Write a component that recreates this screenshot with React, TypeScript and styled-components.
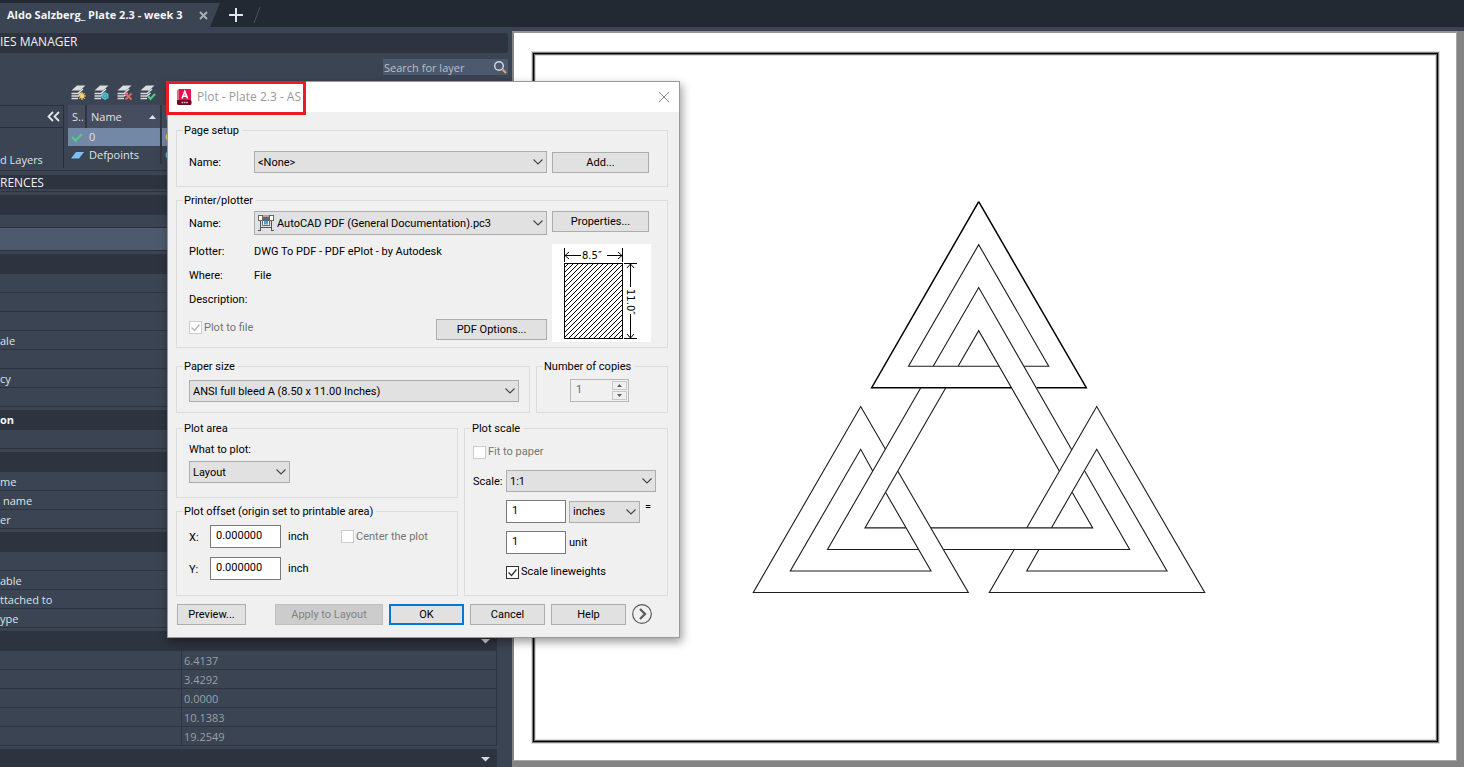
import React from "react";
import styled, { createGlobalStyle, css } from "styled-components";

const GlobalStyle = createGlobalStyle`
  *, *::before, *::after { box-sizing: border-box; }
  body {
    margin: 0;
    background: #3b4453;
    font-family: "Open Sans", "Noto Sans", sans-serif;
    font-size: 11px;
    line-height: 14px;
  }
  button, input, select { font: inherit; margin: 0; }
`;

/* ---------- application shell ---------- */

const Shell = styled.div`
  position: relative;
  display: flex;
  flex-direction: column;
  height: 100vh;
  overflow: hidden;
`;

const TabBar = styled.nav`
  display: flex;
  flex: none;
  height: 27px;
  padding-top: 3px;
  background: #222932;
`;

const FileTab = styled.div`
  display: flex;
  align-items: center;
  gap: 9px;
  width: 220px;
  padding-left: 7px;
  background: #3b4453;
  color: #f2f4f6;
  font-weight: 700;
  white-space: nowrap;
  clip-path: polygon(0 0, 100% 0, 210px 100%, 0 100%);
`;

const TabTitle = styled.span`
  width: 183px;
`;

const BareButton = styled.button`
  display: flex;
  align-items: center;
  justify-content: center;
  padding: 0;
  border: 0;
  background: none;
  color: inherit;
`;

const TabActions = styled.div`
  display: flex;
  align-items: center;
  gap: 10px;
  padding-left: 9px;
`;

const Workspace = styled.div`
  display: flex;
  flex: 1;
  min-height: 0;
`;

/* ---------- left palettes ---------- */

const Palettes = styled.aside`
  flex: none;
  width: 512px;
  padding-top: 6px;
  overflow: hidden;
  background: #3b4453;
  color: #dfe2e6;
  white-space: nowrap;
`;

const PaletteTitle = styled.h2<{ $short?: boolean }>`
  margin: 0 4px 0 0;
  height: ${(p) => (p.$short ? 14 : 20)}px;
  border-radius: 0 3px 3px 0;
  background: #2e343f;
  color: #eef0f2;
  font-size: 12px;
  font-weight: 400;
  line-height: ${(p) => (p.$short ? 16 : 18)}px;
`;

const SearchRow = styled.div`
  display: flex;
  justify-content: flex-end;
  padding: 6px 4px 0 0;
`;

const SearchBox = styled.label`
  display: flex;
  align-items: center;
  width: 125px;
  height: 16px;
  background: #4d5a6d;
`;

const SearchInput = styled.input`
  flex: 1;
  min-width: 0;
  height: 16px;
  padding: 0 1px;
  border: 0;
  background: none;
  color: #b9bfc8;
  &::placeholder { color: #b9bfc8; opacity: 1; }
`;

const LayerTools = styled.div`
  display: flex;
  gap: 5px;
  padding: 9px 0 3px 70px;
`;

const LayerArea = styled.div`
  display: flex;
  gap: 4px;
  height: 66px;
  border-bottom: 1px solid #2e343f;
`;

const FilterTree = styled.div`
  display: flex;
  flex-direction: column;
  justify-content: space-between;
  width: 64px;
  height: 63px;
  border: 1px solid #2a303b;
  border-width: 1px 1px 0 0;
`;

const FilterHead = styled.div`
  display: flex;
  justify-content: flex-end;
  height: 22px;
  padding-right: 3px;
  border-bottom: 1px solid #2a303b;
`;

const FilterItem = styled.span`
  line-height: 16px;
`;

const LayerTable = styled.table`
  width: 400px;
  height: 59px;
  border-collapse: collapse;
  table-layout: fixed;
`;

const LayerHeadCell = styled.th<{ $w?: number }>`
  width: ${(p) => (p.$w ? p.$w + "px" : "auto")};
  height: 23px;
  padding: 0 4px;
  border-right: 2px solid #2f3642;
  background: #454d5f;
  font-weight: 400;
  text-align: left;
  overflow: hidden;
`;

const HeadLabel = styled.span`
  display: flex;
  align-items: center;
  justify-content: space-between;
`;

const LayerRow = styled.tr<{ $selected?: boolean }>`
  height: 18px;
  background: ${(p) => (p.$selected ? "#7387a6" : "transparent")};
`;

const LayerCell = styled.td`
  padding: 0 3px;
  line-height: 14px;
  & + & { border-right: 2px solid #2f3642; }
  svg { display: block; }
`;

const RefBlock = styled.div`
  padding-top: 4px;
`;

const RefLine = styled.div`
  height: 3px;
  margin-bottom: 3px;
  border-bottom: 1px solid #2e343f;
`;

const Selector = styled.div`
  height: 36px;
  margin-bottom: 3px;
  padding-top: 12px;
  border-bottom: 1px solid #2a303b;
  &::before {
    content: "";
    display: block;
    height: 23px;
    border-top: 1px solid #2a303b;
    background: #4d5a6d;
  }
`;

const Section = styled.section`
  width: 497px;
  margin-bottom: 3px;
`;

const SectionTitle = styled.h3`
  display: flex;
  align-items: center;
  justify-content: space-between;
  height: 20px;
  margin: 0;
  padding-right: 7px;
  background: #2e343f;
  color: #f2f4f6;
  font-size: 11px;
  font-weight: 700;
`;

const PropTable = styled.table`
  width: 100%;
  border-collapse: separate;
  border-spacing: 0;
  table-layout: fixed;
`;

const PropName = styled.th<{ $indent?: boolean }>`
  width: 182px;
  height: 19px;
  padding: 1px 0 0 ${(p) => (p.$indent ? 3 : 0)}px;
  border: 1px solid #2e343f;
  border-width: 0 1px 1px 0;
  font-weight: 400;
  text-align: left;
`;

const PropValue = styled.td`
  padding: 1px 2px 0;
  border: 1px solid #2e343f;
  border-width: 0 1px 1px 0;
  color: #9a9fa7;
`;

/* ---------- drawing ---------- */

const Canvas = styled.main`
  display: flex;
  flex: 1;
  min-width: 0;
  padding: 0 7px 6px 0;
  background: linear-gradient(#3b4453 4px, #848484 4px);
`;

const Paper = styled.div`
  display: flex;
  flex: 1;
  margin-top: 4px;
  padding: 20px 18px 18px 19px;
  border: 1px solid #a6a6a6;
  border-width: 2px 1px 1px 2px;
  border-top-color: #949494;
  border-left-color: #848484;
  background: #fff;
`;

const Frame = styled.div`
  display: flex;
  flex: 1;
  min-height: 0;
  border: 1px solid #000;
  box-shadow:
    0 0 0 1px #7c7c7c, 0 0 0 2px #dcdcdc,
    inset 0 0 0 1px #6a6a6a, inset 0 0 0 2px #dcdcdc;
`;

const Drawing = styled.svg`
  display: block;
  width: 100%;
  height: 100%;
`;

/* ---------- plot dialog ---------- */

const Dialog = styled.form`
  position: absolute;
  top: 81px;
  left: 167px;
  width: 513px;
  border: 1px solid #9a9a9a;
  background: #f0f0f0;
  box-shadow: 2px 4px 9px rgba(0, 0, 0, 0.4);
  color: #000;
  font-family: Roboto, "Liberation Sans", sans-serif;
  white-space: nowrap;
`;

const TitleBar = styled.header`
  display: flex;
  align-items: center;
  justify-content: space-between;
  height: 30px;
  padding: 0 9px;
  background: #fff;
  color: #999;
  font-family: "Open Sans", sans-serif;
`;

const TitleText = styled.h1`
  display: flex;
  align-items: center;
  gap: 5px;
  margin: 0;
  font-size: 12px;
  font-weight: 400;
`;

const Highlight = styled.div`
  position: absolute;
  top: -1px;
  left: -2px;
  width: 140px;
  height: 34px;
  border: 3px solid #ed1c24;
  pointer-events: none;
`;

const DialogBody = styled.div`
  padding: 11px 11px 12px 8px;
`;

const Columns = styled.div<{ $mt: number }>`
  display: flex;
  gap: 6px;
  margin-top: ${(p) => p.$mt}px;
`;

const Group = styled.fieldset<{ $h: number; $w?: number; $mt?: number; $pt?: number; $pl?: number }>`
  min-width: 0;
  width: ${(p) => (p.$w ? p.$w + "px" : "auto")};
  height: ${(p) => p.$h}px;
  margin: ${(p) => p.$mt ?? 0}px 0 0;
  padding: ${(p) => p.$pt ?? 5}px 0 0 ${(p) => p.$pl ?? 12}px;
  border: 1px solid #dcdcdc;
  ${(p) => !p.$w && css`flex: 1;`}
`;

const Legend = styled.legend<{ $ml?: number }>`
  height: 14px;
  margin-left: ${(p) => p.$ml ?? -6}px;
  padding: 0 3px 0 1px;
  line-height: 16px;
`;

const Line = styled.div<{ $gap?: number; $h?: number; $mt?: number }>`
  display: flex;
  align-items: center;
  gap: ${(p) => p.$gap ?? 5}px;
  min-height: ${(p) => p.$h ?? 22}px;
  margin-top: ${(p) => p.$mt ?? 0}px;
`;

const Caption = styled.label<{ $w?: number }>`
  flex: none;
  width: ${(p) => (p.$w ? p.$w + "px" : "auto")};
  padding-top: 2px;
`;

const Unit = styled.span<{ $w?: number; $top?: boolean }>`
  width: ${(p) => (p.$w ? p.$w + "px" : "auto")};
  padding-left: 2px;
  ${(p) => p.$top && css`align-self: flex-start;`}
`;

const SelectBox = styled.span<{ $w: number; $h?: number }>`
  display: grid;
  align-items: center;
  width: ${(p) => p.$w}px;
  height: ${(p) => p.$h ?? 22}px;
  & > * { grid-area: 1 / 1; }
  & > svg { pointer-events: none; z-index: 1; }
`;

const NativeSelect = styled.select<{ $icon?: boolean }>`
  width: 100%;
  height: 100%;
  padding: 1px 18px 0 ${(p) => (p.$icon ? 22 : 3)}px;
  appearance: none;
  border: 1px solid #adadad;
  border-radius: 0;
  background: #e1e1e1;
  color: #000;
`;

const Chevron = styled.svg`
  justify-self: end;
  margin-right: 4px;
`;

const PlotterMark = styled.svg`
  justify-self: start;
  margin-left: 4px;
`;

const PushButton = styled.button<{ $w: number; $primary?: boolean; $top?: boolean }>`
  width: ${(p) => p.$w}px;
  height: 21px;
  padding: 1px 0 0;
  border: ${(p) => (p.$primary ? "2px solid #0078d7" : "1px solid #adadad")};
  background: #e1e1e1;
  color: #000;
  ${(p) => p.$top && css`align-self: flex-start;`}
  &:disabled {
    border-color: #bfbfbf;
    background: #ccc;
    color: #838383;
  }
`;

const TextBox = styled.input<{ $w: number }>`
  width: ${(p) => p.$w}px;
  height: 23px;
  padding: 0 5px 2px;
  border: 1px solid #7a7a7a;
  background: #fff;
  color: #000;
`;

const CheckLabel = styled.label<{ $disabled?: boolean }>`
  display: flex;
  align-items: center;
  gap: 2px;
  color: ${(p) => (p.$disabled ? "#767676" : "#000")};
`;

const CheckCell = styled.span`
  display: grid;
  width: 13px;
  height: 13px;
  & > * { grid-area: 1 / 1; }
  & > svg { pointer-events: none; }
`;

const CheckInput = styled.input`
  width: 13px;
  height: 13px;
  appearance: none;
  border: 1px solid #333;
  background: #fff;
  &:disabled { border-color: #ccc; }
`;

const PrinterBody = styled.div`
  display: flex;
  align-items: flex-start;
  gap: 5px;
`;

const Facts = styled.dl`
  display: grid;
  grid-template-columns: 65px 1fr;
  grid-auto-rows: 24px;
  align-items: center;
  width: 358px;
  margin: 5px 0 7px;
`;

const Term = styled.dt`
  margin: 0;
`;

const Fact = styled.dd`
  margin: 0;
`;

const PrinterFoot = styled.div`
  display: flex;
  align-items: flex-start;
  justify-content: space-between;
  height: 21px;
`;

const PreviewPane = styled.svg`
  display: block;
  margin-top: 9px;
  background: #fff;
`;

const Spinner = styled.div`
  display: flex;
  width: 59px;
  height: 23px;
  margin-left: 33px;
  padding: 1px;
  border: 1px solid #b8b8b8;
`;

const SpinnerInput = styled.input`
  flex: 1;
  min-width: 0;
  padding: 0 4px 2px;
  border: 0;
  background: #f0f0f0;
  color: #6d6d6d;
`;

const SpinnerArrows = styled.div`
  display: flex;
  flex-direction: column;
  gap: 1px;
`;

const SpinButton = styled.button`
  display: flex;
  align-items: center;
  justify-content: center;
  width: 15px;
  flex: 1;
  padding: 0;
  border: 1px solid #c8c8c8;
  background: #f0f0f0;
`;

const Stack = styled.div<{ $w?: number }>`
  width: ${(p) => (p.$w ? p.$w + "px" : "auto")};
`;

const ScaleInputs = styled.div`
  margin: 8px 0 0 33px;
`;

const Footer = styled.footer`
  display: flex;
  align-items: center;
  gap: 6px;
  height: 21px;
  margin: 8px 0 0 1px;
`;

const Spacer = styled.span`
  width: 17px;
`;

const ExpandButton = styled(BareButton)`
  align-self: flex-start;
`;

/* ---------- small drawings ---------- */

type LayerBadge = "new" | "frozen" | "delete" | "current";

const LayerIcon = ({ badge }: { badge: LayerBadge }) => (
  <svg width="18" height="18" viewBox="0 0 18 18" fill="none">
    <path d="M7 1.500h8.500l-5.500 5H1.500z" fill="#dadcdf" />
    <path d="M1.500 9.500H8l5-4.500M1.500 12H8l3.500-3M1.500 14.500H8" stroke="#dadcdf" strokeWidth="1.500" />
    {badge === "new" && (
      <g stroke="#f6c65b" strokeWidth="1.200">
        <path d="M12 8v8M8 12h8M9.300 9.300l5.400 5.400M14.700 9.300l-5.400 5.400" />
        <circle cx="12" cy="12" r="1.800" fill="#f9d98c" />
      </g>
    )}
    {badge === "frozen" && (
      <g stroke="#52bccb" strokeWidth="1.300">
        <path d="M12 8v8M8.500 10l7 4M15.500 10l-7 4" />
        <circle cx="12" cy="12" r="2.800" />
      </g>
    )}
    {badge === "delete" && <path d="M9.500 9.500l6 6M15.500 9.500l-6 6" stroke="#f0615c" strokeWidth="2" />}
    {badge === "current" && <path d="M9 12l2.500 3L16 10" stroke="#55c987" strokeWidth="2" />}
  </svg>
);

const Caret = () => (
  <svg width="9" height="5" viewBox="0 0 9 5">
    <path d="M0 0h9L4.500 4.500z" fill="#d6d9dd" />
  </svg>
);

const Tick = ({ muted }: { muted?: boolean }) => (
  <svg width="13" height="13" viewBox="0 0 13 13" fill="none">
    <path d="M2.500 6.500l3 3 5-6" stroke={muted ? "#b4b4b4" : "#333"} strokeWidth="1.300" />
  </svg>
);

const AppMark = () => (
  <svg width="15" height="16" viewBox="0 0 15 16">
    <path d="M2 0h11.500l.5 1v11H1V1z" fill="#e6124f" />
    <path d="M0 1.500L2 0v12H0z" fill="#f0648c" />
    <path d="M0 11h13.500l1 1v3l-1 1H1l-1-1z" fill="#6d0a24" />
    <path d="M5 9.500L7.800 2.500l2.800 7M6 7.300h3.600" stroke="#fff" strokeWidth="1.600" fill="none" />
    <path d="M4.500 13.500h6.500" stroke="#e3b4c0" strokeWidth="1.600" strokeDasharray="1.700 .6" />
  </svg>
);

const PlotterIcon = () => (
  <PlotterMark width="16" height="16" viewBox="0 0 16 16" fill="none">
    <path d="M0 0h16v6H0z" fill="#666" />
    <path d="M1 1h3v4H1zM12 1h3v4h-3z" fill="#fff" />
    <path d="M5 0h6v2H5z" fill="#a8a8a8" />
    <path d="M2.500 6v9M13.500 6v9M3 12.500h10M0 15.500h3M13 15.500h3" stroke="#555" />
    <path d="M4.500 5.500h7v5h-7z" fill="#fff" stroke="#666" />
    <path d="M6 6h4v3.500H6z" fill="#4f9fd8" />
  </PlotterMark>
);

const hatch = Array.from({ length: 28 }, (_, i) => 24 + i * 5);

const PaperPreview = () => (
  <PreviewPane width="99" height="98" viewBox="0 0 99 98" fill="none" stroke="#000">
    <defs>
      <clipPath id="sheet">
        <rect x="12" y="19" width="59" height="76" />
      </clipPath>
    </defs>
    <g clipPath="url(#sheet)" shapeRendering="crispEdges">
      {hatch.map((n) => (
        <path key={n} d={`M12 ${n}l60 -60`} />
      ))}
    </g>
    <rect x="12.500" y="19.500" width="58" height="75" />
    <path d="M12.500 4v14M70.500 4v14M12.500 11.500H29M55 11.500h15.500M17 8l-4 3.500 4 3.500M66 8l4 3.500-4 3.500" />
    <path d="M72 19.500h13M72 94.500h13M78.500 20v23M78.500 70v24M75 24l3.500-4 3.500 4M75 90l3.500 4 3.500-4" />
    <g fill="#000" stroke="none" fontFamily="DejaVu Sans, sans-serif" fontSize="10">
      <text x="30" y="15">8.5″</text>
      <text transform="translate(75 45) rotate(90)">11.0″</text>
    </g>
  </PreviewPane>
);

const strokes = {
  top: "M978.700 201.700L871.700 387.700H1011.600M1036.600 387.700H1086.300L978.700 201.700",
  topInner: "M999.300 366.300H908.500L978.700 244.700L1048.700 366.300H1024.200",
  centre:
    "M933.200 366.300L978.700 287.500L1071.700 449.700M920.800 387.700L827.500 549.500H918.500M943.500 549.500H1129.700L1084.700 471",
  centreInner:
    "M958.100 366.300L978.700 330.700L1059.300 471M945.800 387.700L865 527.900H905.900M931 527.900H1092.700L1072.300 492.500",
  left: "M885.300 449L860.700 406.500L753.300 592.500H968.300L897.700 471",
  leftInner: "M872.700 471L860.700 449.300L790.300 571H931L885.700 492.500",
  right: "M1026.700 527.900L1096.700 406.500L1204.700 592.500H989.300L1014.200 549.500",
  rightInner: "M1051.400 527.900L1096.700 449.300L1167 571H1026.700L1038.900 549.500",
};

/* ---------- building blocks ---------- */

type DropDownProps = { id: string; w: number; h?: number; value: string; label?: string; icon?: boolean };

const DropDown = ({ id, w, h, value, label, icon }: DropDownProps) => (
  <SelectBox $w={w} $h={h}>
    {icon && <PlotterIcon />}
    <NativeSelect id={id} aria-label={label} $icon={icon} defaultValue={value}>
      <option>{value}</option>
    </NativeSelect>
    <Chevron width="10" height="6" viewBox="0 0 10 6" fill="none">
      <path d="M.5 .5L5 5L9.500 .5" stroke="#444" strokeWidth="1.100" />
    </Chevron>
  </SelectBox>
);

const Check = ({ text, checked, disabled }: { text: string; checked?: boolean; disabled?: boolean }) => (
  <CheckLabel $disabled={disabled}>
    <CheckCell>
      <CheckInput type="checkbox" defaultChecked={checked} disabled={disabled} />
      {checked && <Tick muted={disabled} />}
    </CheckCell>
    {text}
  </CheckLabel>
);

type Row = { name?: string; value?: string; indent?: boolean };

const PropertySection = ({ title, rows, arrow }: { title?: string; rows: Row[]; arrow?: boolean }) => (
  <Section>
    <SectionTitle>
      <span>{title}</span>
      {arrow && <Caret />}
    </SectionTitle>
    <PropTable>
      <tbody>
        {rows.map((r, i) => (
          <tr key={i}>
            <PropName scope="row" $indent={r.indent}>{r.name}</PropName>
            <PropValue>{r.value}</PropValue>
          </tr>
        ))}
      </tbody>
    </PropTable>
  </Section>
);

const LeftPalettes = () => (
  <Palettes>
    <PaletteTitle>IES MANAGER</PaletteTitle>
    <SearchRow>
      <SearchBox>
        <SearchInput aria-label="Search for layer" placeholder="Search for layer" />
        <svg width="16" height="16" viewBox="0 0 16 16" fill="none">
          <circle cx="7" cy="7" r="4.300" stroke="#d6dade" strokeWidth="1.400" />
          <path d="M10.500 10.500l3.500 3.500" stroke="#e0a766" strokeWidth="2" />
        </svg>
      </SearchBox>
    </SearchRow>
    <LayerTools>
      <BareButton aria-label="New layer"><LayerIcon badge="new" /></BareButton>
      <BareButton aria-label="New frozen layer"><LayerIcon badge="frozen" /></BareButton>
      <BareButton aria-label="Delete layer"><LayerIcon badge="delete" /></BareButton>
      <BareButton aria-label="Set current"><LayerIcon badge="current" /></BareButton>
    </LayerTools>
    <LayerArea>
      <FilterTree>
        <FilterHead>
          <BareButton aria-label="Collapse">
            <svg width="13" height="11" viewBox="0 0 13 11" fill="none">
              <path d="M6 1L1.500 5.500L6 10M12 1L7.500 5.500L12 10" stroke="#e3e6e9" strokeWidth="1.800" />
            </svg>
          </BareButton>
        </FilterHead>
        <FilterItem>d Layers</FilterItem>
      </FilterTree>
      <LayerTable>
        <thead>
          <tr>
            <LayerHeadCell $w={18}>S..</LayerHeadCell>
            <LayerHeadCell $w={75}>
              <HeadLabel>
                Name
                <svg width="7" height="4" viewBox="0 0 7 4"><path d="M0 4h7L3.500 0z" fill="#dfe2e6" /></svg>
              </HeadLabel>
            </LayerHeadCell>
            <LayerHeadCell>On</LayerHeadCell>
          </tr>
        </thead>
        <tbody>
          <LayerRow $selected>
            <LayerCell>
              <svg width="12" height="9" viewBox="0 0 12 9" fill="none">
                <path d="M1 4l3.500 3.500L11 1" stroke="#55c987" strokeWidth="2.200" />
              </svg>
            </LayerCell>
            <LayerCell>0</LayerCell>
            <LayerCell>
              <svg width="10" height="10" viewBox="0 0 10 10"><circle cx="5" cy="5" r="4.500" fill="#f6c65b" /></svg>
            </LayerCell>
          </LayerRow>
          <LayerRow>
            <LayerCell>
              <svg width="13" height="7" viewBox="0 0 13 7"><path d="M5 0h8L8 6.500H0z" fill="#7cc0f4" /></svg>
            </LayerCell>
            <LayerCell>Defpoints</LayerCell>
            <LayerCell>
              <svg width="10" height="10" viewBox="0 0 10 10"><circle cx="5" cy="5" r="4.500" fill="#52bccb" /></svg>
            </LayerCell>
          </LayerRow>
        </tbody>
      </LayerTable>
    </LayerArea>
    <RefBlock>
      <PaletteTitle $short>RENCES</PaletteTitle>
      <RefLine />
    </RefBlock>
    <SectionTitle as="div" />
    <Selector />
    <PropertySection rows={[{}, {}, {}, { name: "ale" }, {}, { name: "cy" }, {}]} />
    <PropertySection title="on" rows={[{}]} />
    <PropertySection rows={[{ name: "me" }, { name: "name", indent: true }, { name: "er" }]} />
    <PropertySection rows={[{}, { name: "able" }, { name: "ttached to" }, { name: "ype" }]} />
    <PropertySection
      arrow
      rows={[{ value: "6.4137" }, { value: "3.4292" }, { value: "0.0000" }, { value: "10.1383" }, { value: "19.2549" }]}
    />
    <PropertySection arrow rows={[]} />
  </Palettes>
);

const PlotDialog = () => (
  <Dialog role="dialog" aria-label="Plot" onSubmit={(e: React.FormEvent) => e.preventDefault()}>
    <TitleBar>
      <TitleText>
        <AppMark />
        Plot - Plate 2.3 - AS
      </TitleText>
      <BareButton type="button" aria-label="Close">
        <svg width="12" height="12" viewBox="0 0 12 12" fill="none">
          <path d="M1 1l10 10M11 1L1 11" stroke="#8c8c8c" />
        </svg>
      </BareButton>
    </TitleBar>
    <Highlight />
    <DialogBody>
      <Group $h={64} $pt={14}>
        <Legend>Page setup</Legend>
        <Line>
          <Caption $w={60} htmlFor="setup">Name:</Caption>
          <DropDown id="setup" w={293} value="<None>" />
          <PushButton type="button" $w={97}>Add...</PushButton>
        </Line>
      </Group>

      <Group $h={155} $mt={6} $pt={4}>
        <Legend>Printer/plotter</Legend>
        <Line $h={24}>
          <Caption $w={60} htmlFor="printer">Name:</Caption>
          <DropDown id="printer" w={293} h={24} icon value="AutoCAD PDF (General Documentation).pc3" />
          <PushButton type="button" $w={97} $top>Properties...</PushButton>
        </Line>
        <PrinterBody>
          <div>
            <Facts>
              <Term>Plotter:</Term>
              <Fact>DWG To PDF - PDF ePlot - by Autodesk</Fact>
              <Term>Where:</Term>
              <Fact>File</Fact>
              <Term>Description:</Term>
              <Fact />
            </Facts>
            <PrinterFoot>
              <Line $h={17}>
                <Check text="Plot to file" checked disabled />
              </Line>
              <PushButton type="button" $w={111}>PDF Options...</PushButton>
            </PrinterFoot>
          </div>
          <PaperPreview />
        </PrinterBody>
      </Group>

      <Columns $mt={11}>
        <Group $h={54} $w={354} $pt={7}>
          <Legend>Paper size</Legend>
          <DropDown id="paper" label="Paper size" w={330} value="ANSI full bleed A (8.50 x 11.00 Inches)" />
        </Group>
        <Group $h={54} $pt={6} $pl={0}>
          <Legend $ml={6}>Number of copies</Legend>
          <Spinner>
            <SpinnerInput aria-label="Number of copies" defaultValue="1" disabled />
            <SpinnerArrows>
              <SpinButton type="button" aria-label="More" disabled>
                <svg width="5" height="3" viewBox="0 0 5 3"><path d="M0 3h5L2.500 0z" fill="#606060" /></svg>
              </SpinButton>
              <SpinButton type="button" aria-label="Fewer" disabled>
                <svg width="5" height="3" viewBox="0 0 5 3"><path d="M0 0h5L2.500 3z" fill="#606060" /></svg>
              </SpinButton>
            </SpinnerArrows>
          </Spinner>
        </Group>
      </Columns>

      <Columns $mt={8}>
        <Stack $w={282}>
          <Group $h={77} $pt={8}>
            <Legend>Plot area</Legend>
            <Caption htmlFor="what">What to plot:</Caption>
            <Line $mt={4}>
              <DropDown id="what" w={101} value="Layout" />
            </Line>
          </Group>
          <Group $h={92} $mt={6} $pt={7}>
            <Legend>Plot offset (origin set to printable area)</Legend>
            <Line $h={23}>
              <Caption $w={16} htmlFor="offx">X:</Caption>
              <TextBox id="offx" $w={71} defaultValue="0.000000" />
              <Unit $w={50}>inch</Unit>
              <Check text="Center the plot" disabled />
            </Line>
            <Line $h={23} $mt={9}>
              <Caption $w={16} htmlFor="offy">Y:</Caption>
              <TextBox id="offy" $w={71} defaultValue="0.000000" />
              <Unit>inch</Unit>
            </Line>
          </Group>
        </Stack>
        <Group $h={175} $pt={10} $pl={8}>
          <Legend $ml={-2}>Plot scale</Legend>
          <Check text="Fit to paper" disabled />
          <Line $gap={0} $mt={11}>
            <Caption $w={33} htmlFor="scale">Scale:</Caption>
            <DropDown id="scale" w={150} value="1:1" />
          </Line>
          <ScaleInputs>
            <Line $gap={3} $h={23}>
              <TextBox aria-label="Plotted length" $w={60} defaultValue="1" />
              <DropDown id="units" label="Units" w={71} value="inches" />
              <Unit $top>=</Unit>
            </Line>
            <Line $gap={3} $h={23} $mt={8}>
              <TextBox id="unit" $w={60} defaultValue="1" />
              <label htmlFor="unit">unit</label>
            </Line>
            <Line $h={13} $mt={11}>
              <Check text="Scale lineweights" checked />
            </Line>
          </ScaleInputs>
        </Group>
      </Columns>

      <Footer>
        <PushButton type="button" $w={69}>Preview...</PushButton>
        <Spacer />
        <PushButton type="button" $w={108} disabled>Apply to Layout</PushButton>
        <PushButton type="submit" $w={75} $primary>OK</PushButton>
        <PushButton type="button" $w={75}>Cancel</PushButton>
        <PushButton type="button" $w={75}>Help</PushButton>
        <ExpandButton type="button" aria-label="More options">
          <svg width="20" height="20" viewBox="0 0 20 20" fill="none">
            <circle cx="10" cy="10" r="9.300" stroke="#5a5a5a" strokeWidth="1.200" />
            <path d="M8 5l5 5-5 5" stroke="#5a5a5a" strokeWidth="2.200" />
          </svg>
        </ExpandButton>
      </Footer>
    </DialogBody>
  </Dialog>
);

export default function App() {
  return (
    <Shell>
      <GlobalStyle />
      <TabBar>
        <FileTab>
          <TabTitle>Aldo Salzberg_ Plate 2.3 - week 3</TabTitle>
          <BareButton aria-label="Close tab">
            <svg width="9" height="9" viewBox="0 0 9 9" fill="none">
              <path d="M1 1l7 7M8 1L1 8" stroke="#a9aeb5" strokeWidth="2" />
            </svg>
          </BareButton>
        </FileTab>
        <TabActions>
          <BareButton aria-label="New tab">
            <svg width="14" height="14" viewBox="0 0 14 14" fill="none">
              <path d="M7 0v14M0 7h14" stroke="#e3e6e9" strokeWidth="2" />
            </svg>
          </BareButton>
          <svg width="8" height="16" viewBox="0 0 8 16" fill="none">
            <path d="M7 0L1 16" stroke="#4a525f" />
          </svg>
        </TabActions>
      </TabBar>
      <Workspace>
        <LeftPalettes />
        <Canvas>
          <Paper>
            <Frame>
              <Drawing viewBox="534 54 903 687" fill="none" stroke="#1c1c1c" strokeWidth="1.100">
                <path d={strokes.top} stroke="#000" strokeWidth="1.500" />
                <path d={strokes.topInner} />
                <path d={strokes.centre} />
                <path d={strokes.centreInner} />
                <path d={strokes.left} />
                <path d={strokes.leftInner} />
                <path d={strokes.right} />
                <path d={strokes.rightInner} />
              </Drawing>
            </Frame>
          </Paper>
        </Canvas>
      </Workspace>
      <PlotDialog />
    </Shell>
  );
}
